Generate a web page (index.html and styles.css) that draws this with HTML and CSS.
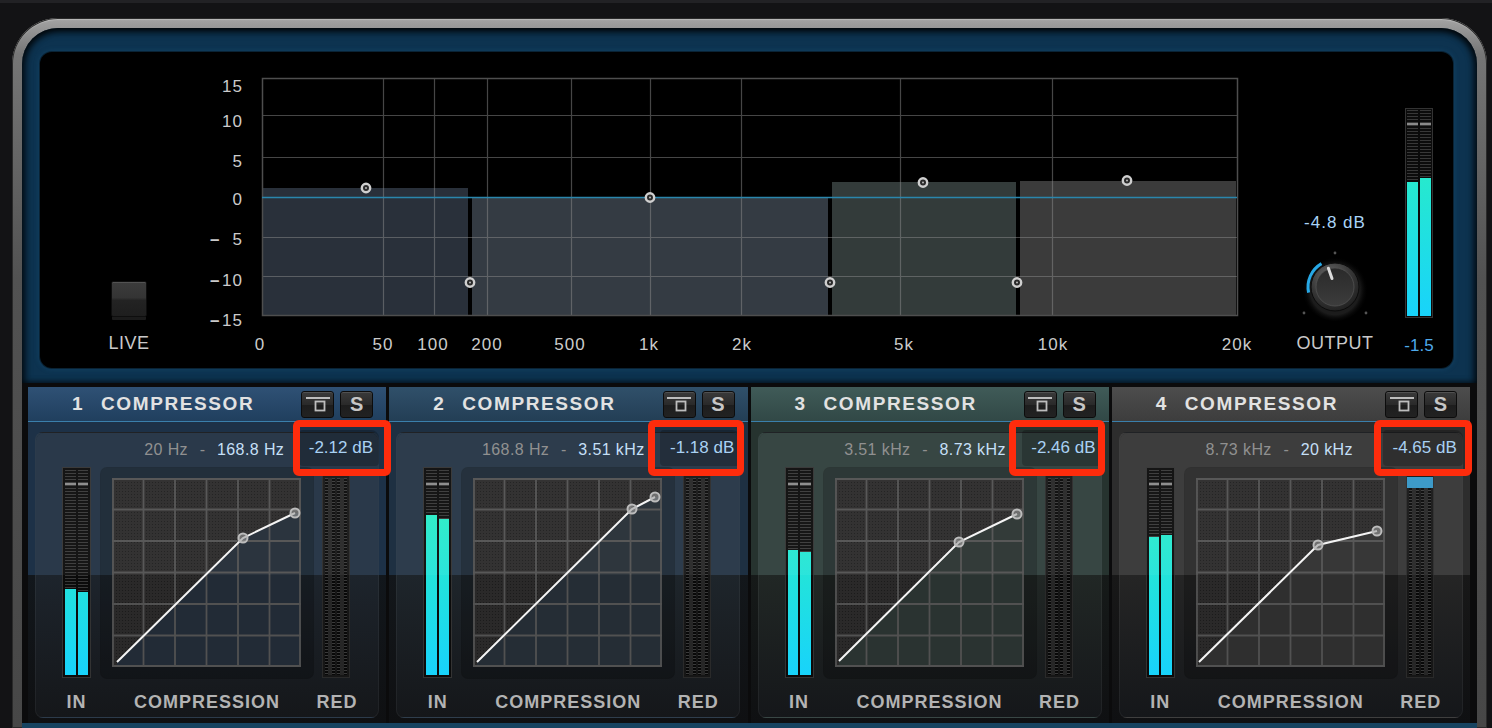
FILE: index.html
```html
<!DOCTYPE html>
<html lang="en">
<head>
    <meta charset="UTF-8">
    <meta name="viewport" content="width=device-width, initial-scale=1.0">
    <title>Multiband Dynamics</title>
    <link rel="stylesheet" href="styles.css">
</head>
<body>
    <svg class="defs" width="0" height="0">
        <defs>
            <pattern id="dots" width="3" height="3" patternUnits="userSpaceOnUse">
                <rect width="3" height="3" fill="#2a2929"/>
                <rect x="1" y="1" width="1" height="1" fill="#1b1b1b"/>
            </pattern>
            <symbol id="grid" viewBox="0 0 189 189">
                <path d="M0 1H189M0 31.5H189M0 63H189M0 94.5H189M0 126H189M0 157.5H189M0 188H189M1 0V189M31.5 0V189M63 0V189M94.5 0V189M126 0V189M157.5 0V189M188 0V189" stroke="#515151" stroke-width="1.8" fill="none"/>
            </symbol>
        </defs>
    </svg>

    <div class="frame">
        <div class="display">
            <div class="screen">
                <div class="live">
                    <button class="live-btn"></button>
                    <span class="caption">LIVE</span>
                </div>

                <svg class="plot" width="1070" height="316" viewBox="0 0 1070 316">
                    <rect x="62" y="136" width="206" height="128" fill="#29303a"/>
                    <rect x="272" y="145" width="356" height="119" fill="#343b43"/>
                    <rect x="632" y="130" width="184" height="134" fill="#333b3a"/>
                    <rect x="820" y="129" width="216" height="135" fill="#3b3b3b"/>

                    <path class="grid-line" d="M62 63.5H1037M62 105.5H1037M62 185.5H1037M62 224.5H1037M183.5 26V264M234.5 26V264M287.5 26V264M371.5 26V264M450.5 26V264M541.5 26V264M700.5 26V264M852.5 26V264"/>
                    <rect class="plot-edge" x="62.5" y="26.5" width="975" height="237"/>
                    <line class="zero" x1="62" y1="145.5" x2="1037" y2="145.5"/>

                    <g class="handle"><circle cx="166" cy="136" r="4.2"/><circle class="dot" cx="166" cy="136" r="1"/></g>
                    <g class="handle"><circle cx="270" cy="230.5" r="4.2"/><circle class="dot" cx="270" cy="230.5" r="1"/></g>
                    <g class="handle"><circle cx="450" cy="145.5" r="4.2"/><circle class="dot" cx="450" cy="145.5" r="1"/></g>
                    <g class="handle"><circle cx="630" cy="230.5" r="4.2"/><circle class="dot" cx="630" cy="230.5" r="1"/></g>
                    <g class="handle"><circle cx="723" cy="130.5" r="4.2"/><circle class="dot" cx="723" cy="130.5" r="1"/></g>
                    <g class="handle"><circle cx="817" cy="230.5" r="4.2"/><circle class="dot" cx="817" cy="230.5" r="1"/></g>
                    <g class="handle"><circle cx="927" cy="128.5" r="4.2"/><circle class="dot" cx="927" cy="128.5" r="1"/></g>

                    <g class="axis y-axis">
                        <text x="43" y="40">15</text>
                        <text x="43" y="75">10</text>
                        <text x="43" y="115">5</text>
                        <text x="43" y="153">0</text>
                        <text x="43" y="193">5</text>
                        <text x="43" y="234">10</text>
                        <text x="43" y="274">15</text>
                    </g>
                    <g class="axis minus">
                        <text x="10" y="193">–</text>
                        <text x="10" y="234">–</text>
                        <text x="10" y="274">–</text>
                    </g>
                    <g class="axis x-axis">
                        <text x="60" y="298">0</text>
                        <text x="183" y="298">50</text>
                        <text x="233" y="298">100</text>
                        <text x="287" y="298">200</text>
                        <text x="370" y="298">500</text>
                        <text x="449" y="298">1k</text>
                        <text x="542" y="298">2k</text>
                        <text x="704" y="298">5k</text>
                        <text x="853" y="298">10k</text>
                        <text x="1037" y="298">20k</text>
                    </g>
                </svg>

                <div class="output">
                    <span class="out-value">-4.8 dB</span>
                    <svg class="knob" width="76" height="76" viewBox="0 0 76 76">
                        <defs>
                            <radialGradient id="knob-body" cx="0.4" cy="0.3" r="0.8">
                                <stop offset="0" stop-color="#6e6e6e"/>
                                <stop offset="0.55" stop-color="#363636"/>
                                <stop offset="1" stop-color="#1a1a1a"/>
                            </radialGradient>
                            <linearGradient id="knob-face" x1="0" y1="0" x2="0" y2="1">
                                <stop offset="0" stop-color="#2a2a2a"/>
                                <stop offset="1" stop-color="#3c3c3c"/>
                            </linearGradient>
                            <radialGradient id="knob-shade" cx="0.5" cy="0.53" r="0.5">
                                <stop offset="0.75" stop-color="#1c1c1c"/>
                                <stop offset="1" stop-color="#000" stop-opacity="0"/>
                            </radialGradient>
                        </defs>
                        <circle cx="38" cy="39" r="33" fill="url(#knob-shade)"/>
                        <circle cx="38" cy="4" r="1.4" fill="#555"/>
                        <circle cx="7" cy="64" r="1.4" fill="#555"/>
                        <circle cx="69" cy="64" r="1.4" fill="#555"/>
                        <path d="M11.6 43.6A27 27 0 0 1 24.5 14.6" fill="none" stroke="#27a8e6" stroke-width="3"/>
                        <circle cx="38" cy="38" r="24" fill="url(#knob-body)" stroke="#0b0b0b"/>
                        <circle cx="38" cy="38" r="19" fill="url(#knob-face)" stroke="#525252" stroke-width="0.8"/>
                        <line x1="35" y1="29.5" x2="31.4" y2="19.2" stroke="#dcdcdc" stroke-width="3" stroke-linecap="round"/>
                    </svg>
                    <span class="caption">OUTPUT</span>
                </div>

                <div class="master">
                    <div class="meter meter-main">
                        <div class="bar"><div class="off peak" style="height: 72px"></div></div>
                        <div class="bar"><div class="off peak" style="height: 68px"></div></div>
                    </div>
                    <span class="master-value">-1.5</span>
                </div>
            </div>
        </div>

        <div class="bands">
            <section class="band band-1">
                <header class="band-head">
                    <span class="band-num">1</span>
                    <span class="band-name">COMPRESSOR</span>
                    <button class="head-btn"><svg width="24" height="15" viewBox="0 0 24 15"><path d="M0 1H24" stroke="#bdbdbd" stroke-width="2"/><rect x="9.5" y="4.5" width="9" height="9" fill="none" stroke="#bdbdbd" stroke-width="1.8"/></svg></button>
                    <button class="head-btn solo">S</button>
                </header>
                <div class="band-body">
                    <div class="panel">
                        <div class="panel-top">
                            <span class="f-lo">20 Hz</span><span class="f-dash">-</span><span class="f-hi">168.8 Hz</span>
                            <span class="gain">-2.12 dB</span>
                        </div>
                        <div class="panel-main">
                            <div class="meter meter-in">
                                <div class="bar"><div class="off peak" style="height: 119px"></div></div>
                                <div class="bar"><div class="off peak" style="height: 122px"></div></div>
                            </div>
                            <div class="curve-box">
                                <svg width="212" height="210" viewBox="0 0 212 210">
                                    <g transform="translate(11 10)">
                                        <rect width="189" height="189" fill="url(#dots)"/>
                                        <polygon class="under" points="5,184 131,60 183,35 189,35 189,189 5,189"/>
                                        <use href="#grid" width="189" height="189"/>
                                        <polyline class="curve" points="5,184 131,60 183,35"/>
                                        <circle class="knot" cx="131" cy="60" r="4.5"/>
                                        <circle class="knot" cx="183" cy="35" r="4.5"/>
                                    </g>
                                </svg>
                            </div>
                            <div class="meter meter-red">
                                <div class="bar-red"></div>
                                <div class="bar-red"></div>
                            </div>
                            <span class="label">IN</span>
                            <span class="label">COMPRESSION</span>
                            <span class="label">RED</span>
                        </div>
                    </div>
                </div>
            </section>

            <section class="band band-2">
                <header class="band-head">
                    <span class="band-num">2</span>
                    <span class="band-name">COMPRESSOR</span>
                    <button class="head-btn"><svg width="24" height="15" viewBox="0 0 24 15"><path d="M0 1H24" stroke="#bdbdbd" stroke-width="2"/><rect x="9.5" y="4.5" width="9" height="9" fill="none" stroke="#bdbdbd" stroke-width="1.8"/></svg></button>
                    <button class="head-btn solo">S</button>
                </header>
                <div class="band-body">
                    <div class="panel">
                        <div class="panel-top">
                            <span class="f-lo">168.8 Hz</span><span class="f-dash">-</span><span class="f-hi">3.51 kHz</span>
                            <span class="gain">-1.18 dB</span>
                        </div>
                        <div class="panel-main">
                            <div class="meter meter-in">
                                <div class="bar"><div class="off peak" style="height: 45px"></div></div>
                                <div class="bar"><div class="off peak" style="height: 49px"></div></div>
                            </div>
                            <div class="curve-box">
                                <svg width="212" height="210" viewBox="0 0 212 210">
                                    <g transform="translate(11 10)">
                                        <rect width="189" height="189" fill="url(#dots)"/>
                                        <polygon class="under" points="4,184 159,31 182,19 189,19 189,189 4,189"/>
                                        <use href="#grid" width="189" height="189"/>
                                        <polyline class="curve" points="4,184 159,31 182,19"/>
                                        <circle class="knot" cx="159" cy="31" r="4.5"/>
                                        <circle class="knot" cx="182" cy="19" r="4.5"/>
                                    </g>
                                </svg>
                            </div>
                            <div class="meter meter-red">
                                <div class="bar-red"></div>
                                <div class="bar-red"></div>
                            </div>
                            <span class="label">IN</span>
                            <span class="label">COMPRESSION</span>
                            <span class="label">RED</span>
                        </div>
                    </div>
                </div>
            </section>

            <section class="band band-3">
                <header class="band-head">
                    <span class="band-num">3</span>
                    <span class="band-name">COMPRESSOR</span>
                    <button class="head-btn"><svg width="24" height="15" viewBox="0 0 24 15"><path d="M0 1H24" stroke="#bdbdbd" stroke-width="2"/><rect x="9.5" y="4.5" width="9" height="9" fill="none" stroke="#bdbdbd" stroke-width="1.8"/></svg></button>
                    <button class="head-btn solo">S</button>
                </header>
                <div class="band-body">
                    <div class="panel">
                        <div class="panel-top">
                            <span class="f-lo">3.51 kHz</span><span class="f-dash">-</span><span class="f-hi">8.73 kHz</span>
                            <span class="gain">-2.46 dB</span>
                        </div>
                        <div class="panel-main">
                            <div class="meter meter-in">
                                <div class="bar"><div class="off peak" style="height: 80px"></div></div>
                                <div class="bar"><div class="off peak" style="height: 82px"></div></div>
                            </div>
                            <div class="curve-box">
                                <svg width="212" height="210" viewBox="0 0 212 210">
                                    <g transform="translate(11 10)">
                                        <rect width="189" height="189" fill="url(#dots)"/>
                                        <polygon class="under" points="4,183 124,64 182,36 189,36 189,189 4,189"/>
                                        <use href="#grid" width="189" height="189"/>
                                        <polyline class="curve" points="4,183 124,64 182,36"/>
                                        <circle class="knot" cx="124" cy="64" r="4.5"/>
                                        <circle class="knot" cx="182" cy="36" r="4.5"/>
                                    </g>
                                </svg>
                            </div>
                            <div class="meter meter-red">
                                <div class="bar-red"></div>
                                <div class="bar-red"></div>
                            </div>
                            <span class="label">IN</span>
                            <span class="label">COMPRESSION</span>
                            <span class="label">RED</span>
                        </div>
                    </div>
                </div>
            </section>

            <section class="band band-4">
                <header class="band-head">
                    <span class="band-num">4</span>
                    <span class="band-name">COMPRESSOR</span>
                    <button class="head-btn"><svg width="24" height="15" viewBox="0 0 24 15"><path d="M0 1H24" stroke="#bdbdbd" stroke-width="2"/><rect x="9.5" y="4.5" width="9" height="9" fill="none" stroke="#bdbdbd" stroke-width="1.8"/></svg></button>
                    <button class="head-btn solo">S</button>
                </header>
                <div class="band-body">
                    <div class="panel">
                        <div class="panel-top">
                            <span class="f-lo">8.73 kHz</span><span class="f-dash">-</span><span class="f-hi">20 kHz</span>
                            <span class="gain">-4.65 dB</span>
                        </div>
                        <div class="panel-main">
                            <div class="meter meter-in">
                                <div class="bar"><div class="off peak" style="height: 67px"></div></div>
                                <div class="bar"><div class="off peak" style="height: 65px"></div></div>
                            </div>
                            <div class="curve-box">
                                <svg width="212" height="210" viewBox="0 0 212 210">
                                    <g transform="translate(11 10)">
                                        <rect width="189" height="189" fill="url(#dots)"/>
                                        <polygon class="under" points="3,184 122,67 181,53 189,53 189,189 3,189"/>
                                        <use href="#grid" width="189" height="189"/>
                                        <polyline class="curve" points="3,184 122,67 181,53"/>
                                        <circle class="knot" cx="122" cy="67" r="4.5"/>
                                        <circle class="knot" cx="181" cy="53" r="4.5"/>
                                    </g>
                                </svg>
                            </div>
                            <div class="meter meter-red hot">
                                <div class="bar-red"></div>
                                <div class="bar-red"></div>
                            </div>
                            <span class="label">IN</span>
                            <span class="label">COMPRESSION</span>
                            <span class="label">RED</span>
                        </div>
                    </div>
                </div>
            </section>
        </div>
        <div class="next-strip"></div>
    </div>
</body>
</html>
```

FILE: styles.css
```css
* {
    box-sizing: border-box;
}
body {
    margin: 0;
    height: 728px;
    overflow: hidden;
    background: #131315;
    border-top: 3px solid #222225;
    font-family: "Liberation Sans", Arial, sans-serif;
}
.defs {
    position: absolute;
}

/* outer bezel */
.frame {
    height: 710px;
    margin: 15px 5px 0 12px;
    padding: 10px 10px 0;
    border-radius: 46px 46px 0 0;
    background: linear-gradient(#a4a4a4, #767676 36px, #525252 260px, #474747);
    box-shadow: inset 0 0 0 1px #2a2a2a, inset 0 2px 1px rgba(255, 255, 255, 0.25);
}
.display {
    padding: 24px 24px 15px 18px;
    border-radius: 36px 36px 0 0;
    background: #0d3350;
    box-shadow: inset 0 4px 7px rgba(0, 0, 0, 0.75), inset 4px 0 6px rgba(0, 0, 0, 0.5), inset -4px 0 6px rgba(0, 0, 0, 0.5);
}
.screen {
    display: flex;
    height: 316px;
    background: #000;
    border-radius: 12px;
    box-shadow: 0 0 0 1px #0a2335, 0 0 6px rgba(40, 120, 170, 0.3);
}

.caption {
    font-size: 18px;
    line-height: 20px;
    letter-spacing: 0.5px;
    color: #c9c9c9;
}

/* live switch */
.live {
    width: 160px;
    display: flex;
    flex-direction: column;
    align-items: center;
    justify-content: flex-end;
    padding: 0 0 15px 18px;
}
.live-btn {
    width: 36px;
    height: 36px;
    margin-bottom: 16px;
    padding: 0;
    border: 1px solid #0e0e0e;
    border-radius: 2px;
    background: linear-gradient(#3c3c3c, #343434 46%, #232323 54%, #1e1e1e);
    box-shadow: inset 0 1px 0 rgba(255, 255, 255, 0.12), 0 4px 0 -1px #1b1b1b;
}

/* spectrum */
.plot {
    display: block;
    flex: none;
}
.grid-line {
    stroke: rgba(140, 140, 140, 0.5);
    stroke-width: 1.2;
    fill: none;
}
.plot-edge {
    fill: none;
    stroke: #4e4e4e;
    stroke-width: 1.5;
}
.zero {
    stroke: #2a86ad;
    stroke-width: 1.6;
}
.handle circle {
    fill: #2a2a2a;
    stroke: #cfcfcf;
    stroke-width: 2.4;
}
.handle .dot {
    fill: #bbb;
    stroke: none;
}
.axis text {
    font-family: "Liberation Sans", Arial, sans-serif;
    font-size: 17px;
    letter-spacing: 1px;
    fill: #cbcbcb;
}
.y-axis text {
    text-anchor: end;
}
.minus text {
    letter-spacing: 0;
    font-weight: bold;
}
.x-axis text {
    text-anchor: middle;
}

/* output */
.output {
    width: 130px;
    display: flex;
    flex-direction: column;
    align-items: center;
    justify-content: flex-end;
    padding-bottom: 15px;
}
.out-value {
    font-size: 17px;
    line-height: 20px;
    letter-spacing: 1px;
    color: #a9d4f7;
    margin-bottom: 16px;
}
.knob {
    display: block;
    margin-bottom: 8px;
}
.master {
    width: 53px;
    padding-top: 56px;
}
.master-value {
    display: block;
    width: 38px;
    margin-top: 18px;
    text-align: center;
    font-size: 17px;
    line-height: 20px;
    color: #4ea9ea;
}

/* meters */
.meter {
    display: flex;
    gap: 2px;
    background: #0b0b0b;
    border: 1px solid #333;
}
.meter-main {
    width: 28px;
    height: 210px;
    margin-left: 5px;
    padding: 1px;
}
.bar {
    flex: 1;
    background: linear-gradient(to top, #18d3fb, #2df4b8);
}
.off {
    background: repeating-linear-gradient(#383838 0 1px, #0c0c0c 1px 3px);
}
.off.peak {
    background:
        linear-gradient(transparent 13px, #8a8a8a 13px, #8a8a8a 15px, transparent 15px),
        repeating-linear-gradient(#383838 0 1px, #0c0c0c 1px 3px);
}

/* bands */
.bands {
    display: flex;
    gap: 3px;
    padding: 4px 7px 0 6px;
    background: #0b0b0c;
}
.next-strip {
    height: 5px;
    background: #174360;
}
.band {
    flex: 1;
    height: 336px;
    display: flex;
    flex-direction: column;
}
.band-1 {
    --h1: #2f5175;
    --h2: #203f5e;
    --col1: #1d3147;
    --col2: #12171c;
    --pnl1: #213142;
    --pnl2: #1d242c;
    --under: #222b36;
}
.band-2 {
    --h1: #30506a;
    --h2: #233e55;
    --col1: #1e3042;
    --col2: #13171b;
    --pnl1: #243444;
    --pnl2: #1e252b;
    --under: #252d35;
}
.band-3 {
    --h1: #405b58;
    --h2: #314846;
    --col1: #26332f;
    --col2: #161a19;
    --pnl1: #2f3e3b;
    --pnl2: #212725;
    --under: #2a3331;
}
.band-4 {
    --h1: #4d4d4d;
    --h2: #3d3d3d;
    --col1: #2d2d2d;
    --col2: #181818;
    --pnl1: #353535;
    --pnl2: #252525;
    --under: #2f2f2f;
}
.band-head {
    height: 35px;
    display: flex;
    align-items: center;
    padding: 0 13px 0 44px;
    background: linear-gradient(var(--h1), var(--h2));
    border-bottom: 1px solid #3a7fab;
    color: #e2e2e2;
    font-size: 19px;
    font-weight: bold;
}
.band-num {
    width: 29px;
}
.band-name {
    flex: 1;
    letter-spacing: 1.6px;
}
.head-btn {
    width: 33px;
    height: 27px;
    margin-left: 6px;
    padding: 0;
    display: flex;
    align-items: center;
    justify-content: center;
    border: 1px solid #0c0c0c;
    border-radius: 3px;
    background: linear-gradient(#3a3a3a, #2a2a2a 50%, #1d1d1d 50%, #222);
    box-shadow: inset 0 1px 0 rgba(255, 255, 255, 0.12);
}
.head-btn svg {
    display: block;
}
.solo {
    font-family: "Liberation Sans", Arial, sans-serif;
    font-size: 20px;
    font-weight: bold;
    color: #c6c6c6;
}
.band-body {
    flex: 1;
    padding: 10px 0 5px 7px;
    background: linear-gradient(var(--col1), var(--col1) 153px, var(--col2) 153px, #0f1012);
}

/* band panel */
.panel {
    position: relative;
    width: 344px;
    height: 286px;
    border: 1px solid rgba(255, 255, 255, 0.05);
    border-radius: 8px;
    background: linear-gradient(var(--pnl1), var(--pnl1) 142px, var(--pnl2) 142px, #15171a);
}
.panel::after {
    content: "";
    position: absolute;
    left: 0;
    right: 0;
    top: 0;
    height: 142px;
    border-radius: 8px 8px 0 0;
    background: rgba(255, 255, 255, 0.045);
    pointer-events: none;
}
.panel-top {
    height: 34px;
    display: flex;
    align-items: center;
    font-size: 16px;
    letter-spacing: 0.4px;
}
.f-lo {
    width: 152px;
    text-align: right;
    color: #8c8c8c;
}
.f-dash {
    width: 29px;
    text-align: center;
    color: #8c8c8c;
}
.f-hi {
    color: #c3dff7;
}
.gain {
    position: relative;
    z-index: 2;
    align-self: flex-start;
    width: 80px;
    height: 36px;
    margin: -3px -1px 0 auto;
    padding-right: 6px;
    text-align: right;
    line-height: 36px;
    font-size: 17px;
    letter-spacing: 0;
    color: #a9d1f3;
    background: rgba(0, 0, 0, 0.22);
    border-radius: 4px 8px 4px 4px;
}
.gain::after {
    content: "";
    position: absolute;
    top: -10px;
    bottom: -10px;
    left: -9px;
    right: -9px;
    border: 7px solid #fe2c0c;
    border-radius: 6px;
}
.band-1 .gain::after {
    left: -6px;
    right: -12px;
}
.band-2 .gain::after {
    left: -12px;
    right: -4px;
}
.band-3 .gain::after {
    left: -13px;
    right: -3px;
}

.panel-main {
    display: grid;
    grid-template-columns: 29px 212px 28px;
    grid-template-rows: 211px 40px;
    column-gap: 10px;
    align-items: end;
    padding-left: 26px;
}
.meter-in {
    width: 29px;
    height: 211px;
    padding: 2px;
}
.curve-box {
    height: 210px;
    border-radius: 6px;
    background: rgba(0, 0, 0, 0.22);
    box-shadow: 0 0 0 1px rgba(0, 0, 0, 0.25);
}
.curve-box svg {
    display: block;
}
.under {
    fill: var(--under);
}
.curve {
    fill: none;
    stroke: #f4f4f4;
    stroke-width: 2;
}
.knot {
    fill: rgba(150, 150, 150, 0.6);
    stroke: #b9b9b9;
    stroke-width: 2;
}
.meter-red {
    width: 28px;
    height: 203px;
    margin-left: -1px;
    padding: 2px;
    background: #161616;
    border-color: #2a2a2a;
}
.meter-red.hot {
    background: linear-gradient(#161616 1px, #3596c6 1px, #3596c6 12px, #161616 12px);
}
.bar-red {
    flex: 1;
    background:
        linear-gradient(90deg, transparent 3px, #262626 3px, #262626 calc(100% - 3px), transparent calc(100% - 3px)),
        repeating-linear-gradient(#3a3a3a 0 1px, #080808 1px 3px);
}
.hot .bar-red {
    background:
        linear-gradient(#3596c6 0, #3596c6 10px, transparent 10px),
        linear-gradient(90deg, transparent 3px, #262626 3px, #262626 calc(100% - 3px), transparent calc(100% - 3px)),
        repeating-linear-gradient(#3a3a3a 0 1px, #080808 1px 3px);
}
.label {
    align-self: start;
    display: flex;
    justify-content: center;
    margin-top: 14px;
    white-space: nowrap;
    font-size: 18px;
    line-height: 20px;
    font-weight: bold;
    letter-spacing: 1px;
    color: #b3b3b3;
}
```
